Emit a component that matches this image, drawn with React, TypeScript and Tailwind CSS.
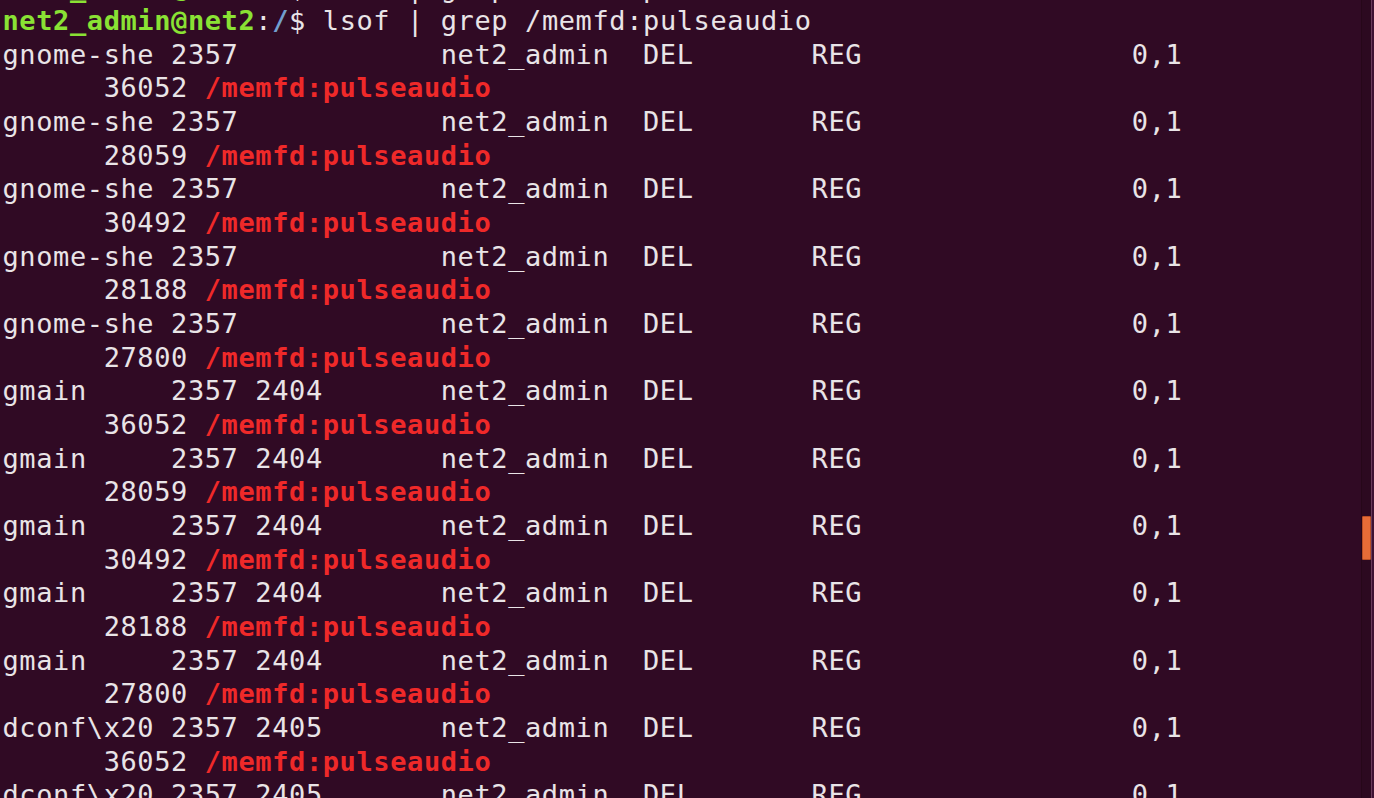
import React from 'react';

const sizes = ['36052', '28059', '30492', '28188', '27800'];

const rows: { cmd: string; size: string }[] = [
  ...sizes.map((size) => ({ cmd: 'gnome-she 2357', size })),
  ...sizes.map((size) => ({ cmd: 'gmain     2357 2404', size })),
  { cmd: 'dconf\\x20 2357 2405', size: '36052' },
  { cmd: 'dconf\\x20 2357 2405', size: '28059' },
];

const tail = 'net2_admin  DEL' + ' '.repeat(7) + 'REG' + ' '.repeat(16) + '0,1';

const Prompt: React.FC = () => (
  <div>
    <span className="font-bold text-[#8ae234]">net2_admin@net2</span>
    <span>:</span>
    <span className="font-bold text-[#729fcf]">/</span>
    <span>$ lsof | grep /memfd:pulseaudio</span>
  </div>
);

const App: React.FC = () => {
  return (
    <div className="flex h-screen w-full overflow-hidden bg-[#300a24]">
      {/* terminal text */}
      <div className="flex-1 overflow-hidden pl-[2.5px]">
        <div className="-mt-[29.5px] whitespace-pre font-['DejaVu_Sans_Mono','Liberation_Mono',monospace] text-[27px] leading-[33.65px] tracking-[0.6px] text-[#e9e4e7]">
          <Prompt />
          <Prompt />
          {rows.map((r, i) => (
            <React.Fragment key={i}>
              <div>{r.cmd.padEnd(26, ' ') + tail}</div>
              {i < rows.length - 1 && (
                <div>
                  {'      ' + r.size + ' '}
                  <span className="font-bold text-[#ef2929]">/memfd:pulseaudio</span>
                </div>
              )}
            </React.Fragment>
          ))}
        </div>
      </div>

      {/* scrollbar */}
      <div className="flex w-[13px] shrink-0">
        <div className="w-px bg-[#260719]" />
        <div className="flex w-[9px] flex-col bg-[#2c0920]">
          <div className="mt-[516px] h-[44px] w-full rounded-[1px] border border-[#b94f26] bg-[#e66c37]" />
        </div>
        <div className="w-px bg-[#6a3a5a]" />
        <div className="w-[2px] bg-[#3e1232]" />
      </div>
    </div>
  );
};

export default App;
